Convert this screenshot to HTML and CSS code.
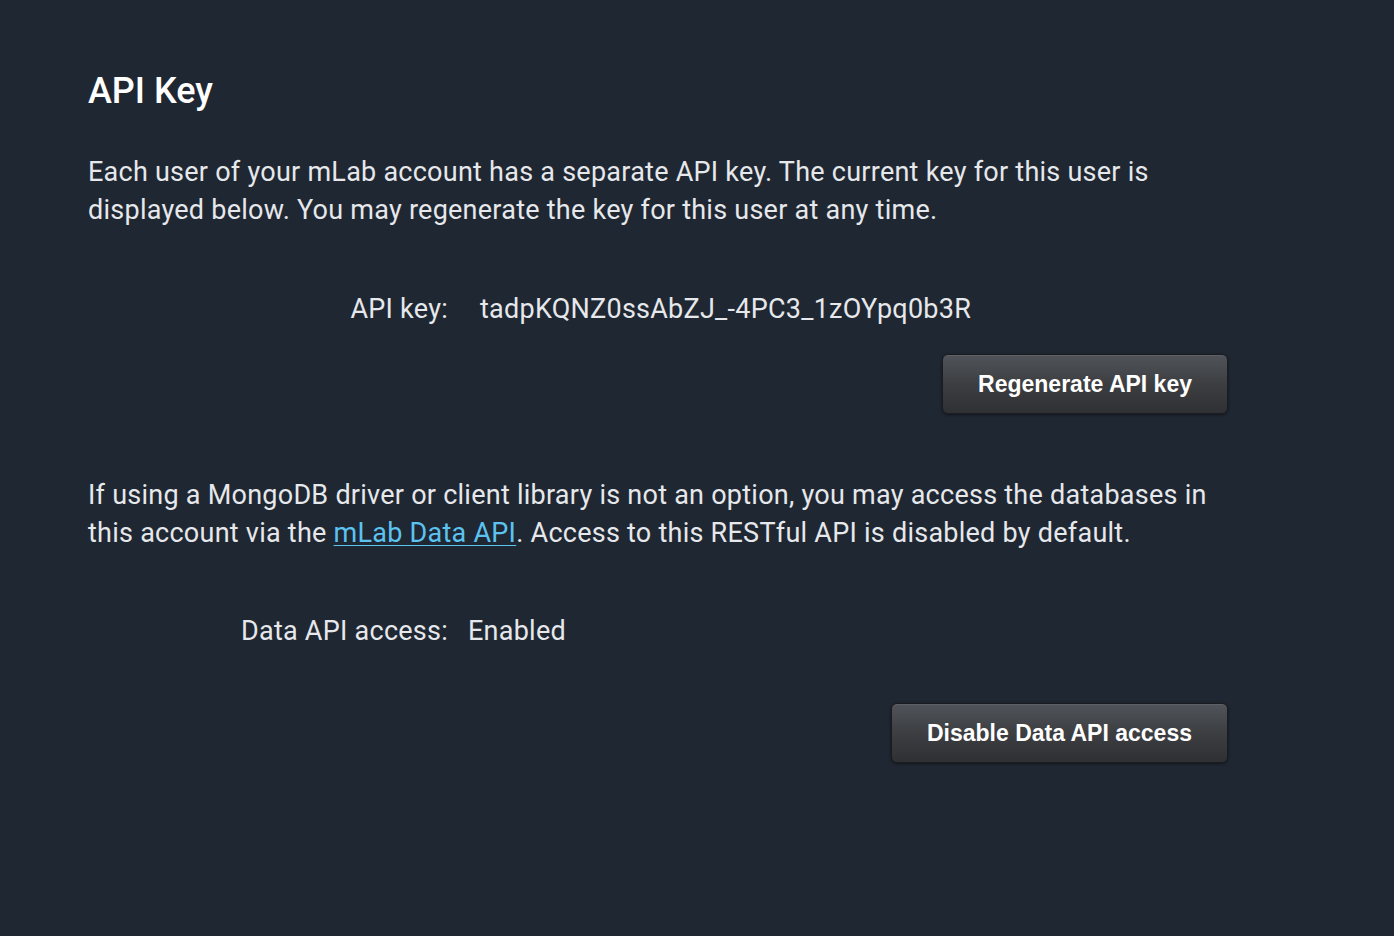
FILE: index.html
```html
<!DOCTYPE html>
<html lang="en">
<head>
<meta charset="utf-8">
<title>API Key</title>
<link rel="stylesheet" href="styles.css">
</head>
<body>
<main class="panel">
  <h1 class="title">API Key</h1>
  <p class="text first">Each user of your mLab account has a separate API key. The current key for this user is displayed below. You may regenerate the key for this user at any time.</p>
  <div class="field key-field">
    <span class="label">API key:</span>
    <span class="value key-value">tadpKQNZ0ssAbZJ_-4PC3_1zOYpq0b3R</span>
  </div>
  <div class="actions regen">
    <button class="btn" type="button">Regenerate API key</button>
  </div>
  <p class="text second">If using a MongoDB driver or client library is not an option, you may access the databases in this account via the <a class="link" href="#">mLab Data API</a>. Access to this RESTful API is disabled by default.</p>
  <div class="field access-field">
    <span class="label">Data API access:</span>
    <span class="value access-value">Enabled</span>
  </div>
  <div class="actions disable">
    <button class="btn" type="button">Disable Data API access</button>
  </div>
</main>
</body>
</html>
```

FILE: styles.css
```css
html, body {
  margin: 0;
  padding: 0;
  background: #1f2732;
  height: 100%;
}

body {
  font-family: Roboto, "Liberation Sans", sans-serif;
  color: #e6e8eb;
}

.panel {
  width: 1140px;
  padding: 69px 0 0 88px;
}

.title {
  margin: 0;
  font-size: 36px;
  line-height: 44px;
  font-weight: 500;
  color: #ffffff;
}

.text {
  margin: 0;
  font-size: 27px;
  line-height: 38px;
  font-weight: 400;
  letter-spacing: 0.25px;
}

.text.first {
  margin-top: 40px;
}

.text.second {
  margin-top: 62px;
}

.link {
  color: #5cc3f0;
  text-decoration: underline;
  text-underline-offset: 3px;
  text-decoration-thickness: 1px;
}

.field {
  display: flex;
  font-size: 27px;
  line-height: 38px;
  letter-spacing: 0.25px;
}

.field .label {
  width: 360px;
  text-align: right;
  flex: none;
}

.key-field {
  margin-top: 61px;
}

.key-value {
  margin-left: 32px;
}

.access-field {
  margin-top: 60px;
}

.access-value {
  margin-left: 20px;
}

.actions {
  display: flex;
  justify-content: flex-end;
}

.actions.regen {
  margin-top: 26px;
}

.actions.disable {
  margin-top: 53px;
}

.btn {
  font-family: "Liberation Sans", Arial, sans-serif;
  font-size: 23px;
  font-weight: bold;
  color: #ffffff;
  height: 60px;
  padding: 0 35px;
  border: 1px solid #1a1c1f;
  border-radius: 6px;
  background: linear-gradient(to bottom, #50545a 0%, #3c3e41 50%, #2f3033 100%);
  box-shadow: 0 1px 3px rgba(0, 0, 0, 0.45), inset 0 1px 0 rgba(255, 255, 255, 0.08);
  cursor: pointer;
}
```
